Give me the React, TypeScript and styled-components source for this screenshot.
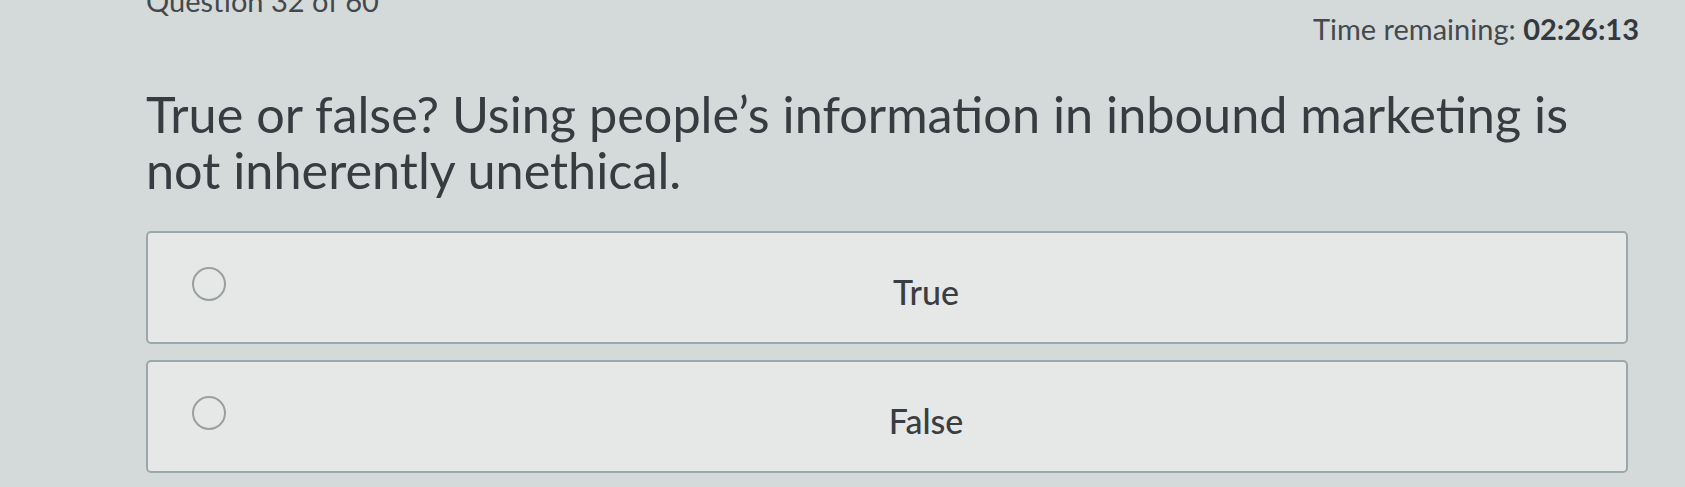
import React from "react";
import styled, { createGlobalStyle } from "styled-components";

const Global = createGlobalStyle`
  html, body { margin: 0; padding: 0; }
  body {
    background: #d4d9da;
    font-family: "Lato", "Open Sans", sans-serif;
    color: #3a3e42;
    width: 1685px;
    height: 487px;
    overflow: hidden;
  }
`;

const Page = styled.div`
  padding: 0 57px 0 146px;
  display: flex;
  flex-direction: column;
`;

const Header = styled.div`
  display: flex;
  justify-content: space-between;
  align-items: flex-start;
  height: 86px;
`;

const Counter = styled.div`
  font-size: 29px;
  line-height: 29px;
  margin-top: -14px;
  color: #44484c;
`;

const Timer = styled.div`
  font-size: 29px;
  line-height: 34px;
  margin-top: 12px;
  margin-right: -11px;
  color: #45494d;
  b { font-weight: 700; color: #35393d; }
`;

const Question = styled.h1`
  margin: 0;
  font-size: 50.4px;
  font-weight: 400;
  line-height: 56px;
  max-width: 1470px;
  color: #383c40;
`;

const Options = styled.div`
  display: flex;
  flex-direction: column;
  gap: 16px;
  margin-top: 33px;
`;

const Option = styled.label`
  display: flex;
  align-items: center;
  height: 113px;
  padding: 0 0 0 44px;
  box-sizing: border-box;
  background: #e6e8e7;
  border: 2px solid #9aa8ab;
  border-radius: 5px;
  cursor: pointer;
`;

const Radio = styled.span`
  width: 34px;
  height: 34px;
  border-radius: 50%;
  border: 2px solid #9a9fa2;
  box-sizing: border-box;
  flex: none;
  margin-top: -8px;
`;

const Label = styled.span`
  flex: 1;
  text-align: center;
  font-size: 34px;
  font-weight: 500;
  color: #3a3e42;
  margin-top: 8px;
`;

export default function App() {
  return (
    <>
      <Global />
      <Page>
        <Header>
          <Counter>Question 32 of 60</Counter>
          <Timer>
            Time remaining: <b>02:26:13</b>
          </Timer>
        </Header>
        <Question>
          True or false? Using people’s information in inbound marketing is not inherently unethical.
        </Question>
        <Options>
          <Option>
            <Radio />
            <Label>True</Label>
          </Option>
          <Option>
            <Radio />
            <Label>False</Label>
          </Option>
        </Options>
      </Page>
    </>
  );
}
